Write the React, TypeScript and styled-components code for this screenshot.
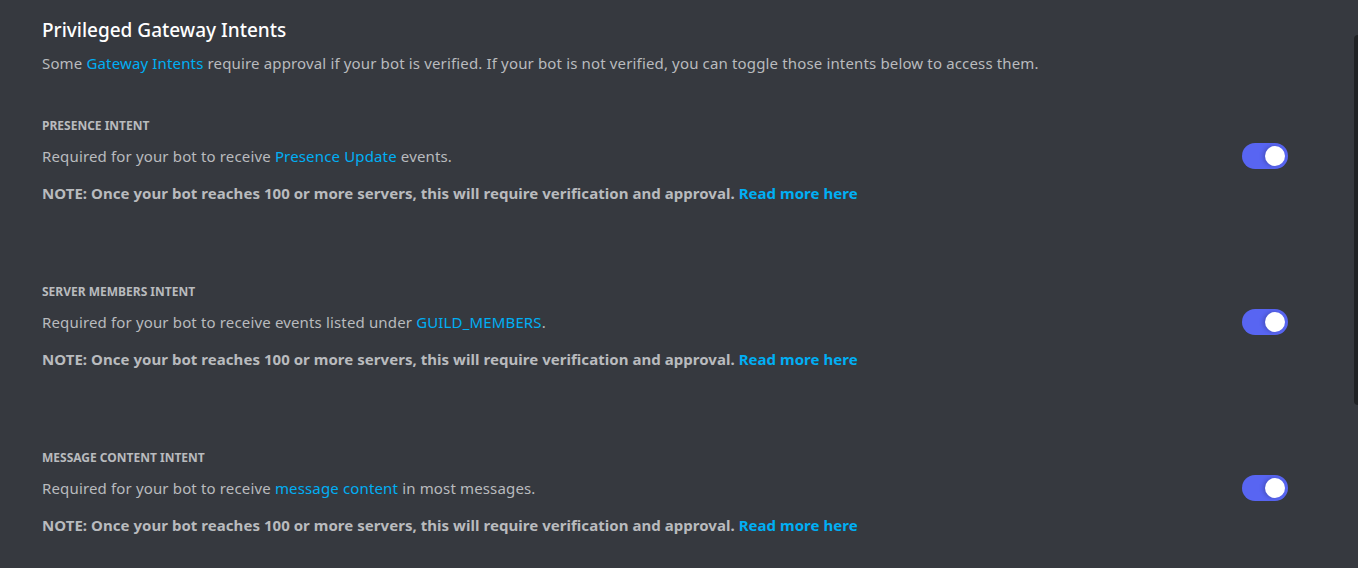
import React from "react";
import styled, { createGlobalStyle } from "styled-components";

const GlobalStyle = createGlobalStyle`
  html, body {
    margin: 0;
    padding: 0;
    background: #36393f;
    overflow: hidden;
  }
  body {
    font-family: "Noto Sans", "Open Sans", sans-serif;
  }
`;

const intents = [
  {
    title: "PRESENCE INTENT",
    before: "Required for your bot to receive ",
    link: "Presence Update",
    after: " events.",
  },
  {
    title: "SERVER MEMBERS INTENT",
    before: "Required for your bot to receive events listed under ",
    link: "GUILD_MEMBERS",
    after: ".",
  },
  {
    title: "MESSAGE CONTENT INTENT",
    before: "Required for your bot to receive ",
    link: "message content",
    after: " in most messages.",
  },
];

const App = () => {
  return (
    <>
      <GlobalStyle />
      <Page>
        <Content>
          <Title>Privileged Gateway Intents</Title>
          <Intro>
            Some <Link>Gateway Intents</Link> require approval if your bot is
            verified. If your bot is not verified, you can toggle those intents
            below to access them.
          </Intro>
          {intents.map((intent) => (
            <Section key={intent.title}>
              <Label>{intent.title}</Label>
              <Row>
                <Description>
                  {intent.before}
                  <Link>{intent.link}</Link>
                  {intent.after}
                </Description>
                <Switch>
                  <Knob />
                </Switch>
              </Row>
              <Note>
                NOTE: Once your bot reaches 100 or more servers, this will
                require verification and approval. <NoteLink>Read more here</NoteLink>
              </Note>
            </Section>
          ))}
        </Content>
        <ScrollTrack>
          <Thumb />
        </ScrollTrack>
      </Page>
    </>
  );
};

const Page = styled.div`
  display: flex;
  width: 1358px;
  height: 568px;
  overflow: hidden;
  background: #36393f;
`;

const Content = styled.div`
  flex: 1;
  padding: 16px 66px 0 42px;
`;

const Title = styled.h2`
  margin: 0;
  font-size: 19px;
  line-height: 28px;
  font-weight: 500;
  color: #ffffff;
`;

const Intro = styled.p`
  margin: 9px 0 0;
  font-size: 15px;
  line-height: 20px;
  letter-spacing: 0.15px;
  color: #b9bbbe;
`;

const Section = styled.div`
  margin-top: 45px;
  height: 121px;
`;

const Label = styled.div`
  font-size: 12px;
  line-height: 16px;
  font-weight: 700;
  color: #b9bbbe;
`;

const Row = styled.div`
  display: flex;
  align-items: center;
  justify-content: space-between;
  margin-top: 9px;
`;

const Description = styled.p`
  margin: 0;
  font-size: 15px;
  line-height: 20px;
  letter-spacing: 0.15px;
  color: #b9bbbe;
`;

const Link = styled.span`
  color: #00aff4;
`;

const Switch = styled.div`
  position: relative;
  width: 46px;
  height: 26px;
  border-radius: 13px;
  background: #5865f2;
  box-sizing: border-box;
`;

const Knob = styled.div`
  position: absolute;
  top: 3px;
  right: 3px;
  width: 20px;
  height: 20px;
  border-radius: 50%;
  background: #ffffff;
  box-shadow: -2px 0 4px rgba(0, 0, 0, 0.2);
`;

const Note = styled.p`
  margin: 14px 0 0;
  font-size: 15px;
  line-height: 20px;
  font-weight: 700;
  letter-spacing: 0.04px;
  color: #b9bbbe;
`;

const NoteLink = styled.span`
  color: #00aff4;
`;

const ScrollTrack = styled.div`
  width: 4px;
  padding-top: 35px;
`;

const Thumb = styled.div`
  height: 370px;
  background: #202225;
  border-radius: 4px 0 0 4px;
`;

export default App;
